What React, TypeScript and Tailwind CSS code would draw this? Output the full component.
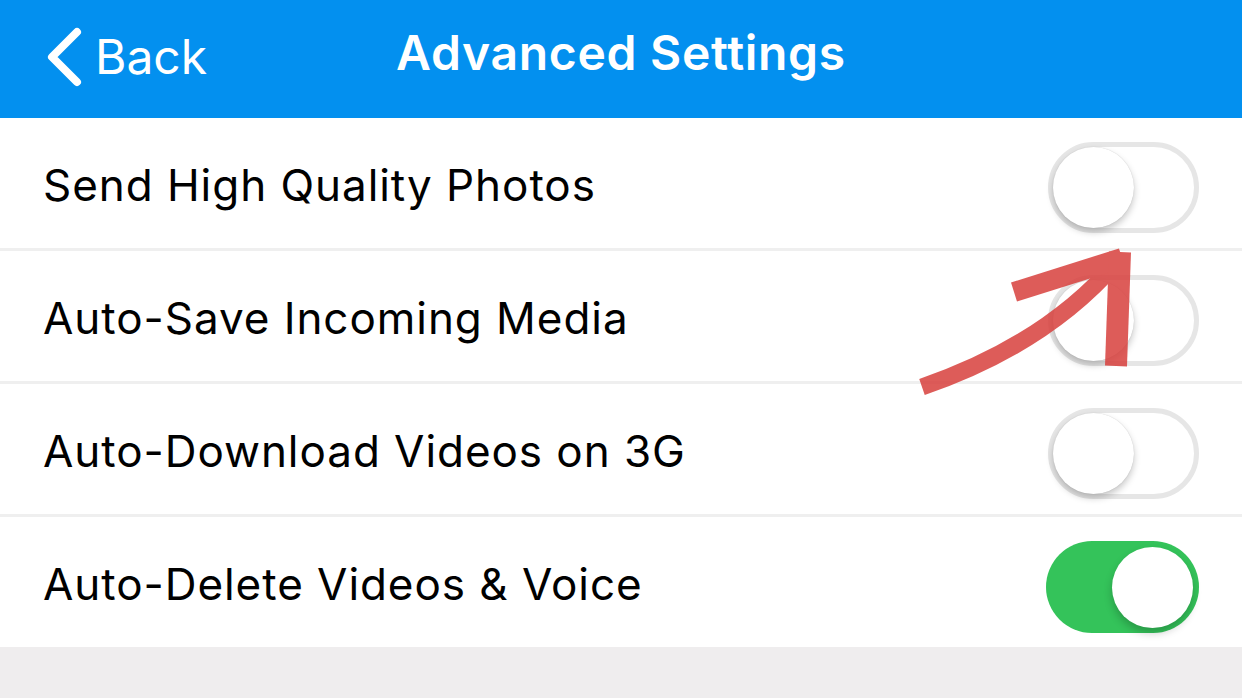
import React from "react";

type Row = { label: string; on: boolean };

const rows: Row[] = [
  { label: "Send High Quality Photos", on: false },
  { label: "Auto-Save Incoming Media", on: false },
  { label: "Auto-Download Videos on 3G", on: false },
  { label: "Auto-Delete Videos & Voice", on: true },
];

function Toggle({ on }: { on: boolean }) {
  if (on) {
    return (
      <div className="relative mt-[9px] h-[92px] w-[153px] rounded-full bg-[#34c35a]">
        <div className="absolute right-[6px] top-[6px] h-[81px] w-[81px] rounded-full bg-white shadow-[0_5px_8px_rgba(0,0,0,0.22)]" />
      </div>
    );
  }
  return (
    <div className="relative mt-[9px] h-[91px] w-[151px] rounded-full border-[5px] border-[#e6e6e6] bg-white">
      <div className="absolute left-0 top-0 h-[81px] w-[81px] rounded-full bg-white shadow-[0_4px_7px_rgba(0,0,0,0.22),0_0_1px_rgba(0,0,0,0.2)]" />
    </div>
  );
}

export default function App() {
  return (
    <div
      className="relative flex h-[698px] w-[1242px] flex-col overflow-hidden bg-[#efedee]"
      style={{ fontFamily: "Inter, 'Noto Sans', sans-serif" }}
    >
      <header className="relative flex h-[118px] shrink-0 items-center bg-[#0390ef] text-white">
        <div className="flex items-center pl-[44px] pb-[4px]">
          <svg width="38" height="60" viewBox="0 0 38 60" className="mr-[13px]">
            <path d="M33 5 L8 30 L33 55" fill="none" stroke="white" strokeWidth="8" strokeLinecap="round" strokeLinejoin="round" />
          </svg>
          <span className="text-[48px] leading-none">Back</span>
        </div>
        <h1 className="absolute left-0 right-0 top-[23px] text-center text-[48px] font-semibold leading-[60px] tracking-[0.7px]">
          Advanced Settings
        </h1>
      </header>

      <div className="flex flex-col bg-white">
        {rows.map((r, i) => (
          <div key={r.label} className={"flex flex-col " + (i < rows.length - 1 ? "border-b-[3px] border-[#efefef]" : "")}>
            <div className="flex h-[130px] items-center justify-between pl-[43px] pr-[43px]">
              <span className="pt-[3px] text-[44px] tracking-[0.95px] text-black">{r.label}</span>
              <Toggle on={r.on} />
            </div>
          </div>
        ))}
      </div>

      <svg className="pointer-events-none absolute left-0 top-0" width="1242" height="698" viewBox="0 0 1242 698">
        <g opacity="0.85" stroke="#d8403d" fill="none" strokeLinecap="butt" strokeLinejoin="round">
          <path d="M922 387 Q 1045 345 1117 262" strokeWidth="17" />
          <path d="M1014 292 L1122 258" strokeWidth="20" />
          <path d="M1120 252 L1116 366" strokeWidth="22" />
        </g>
      </svg>
    </div>
  );
}
